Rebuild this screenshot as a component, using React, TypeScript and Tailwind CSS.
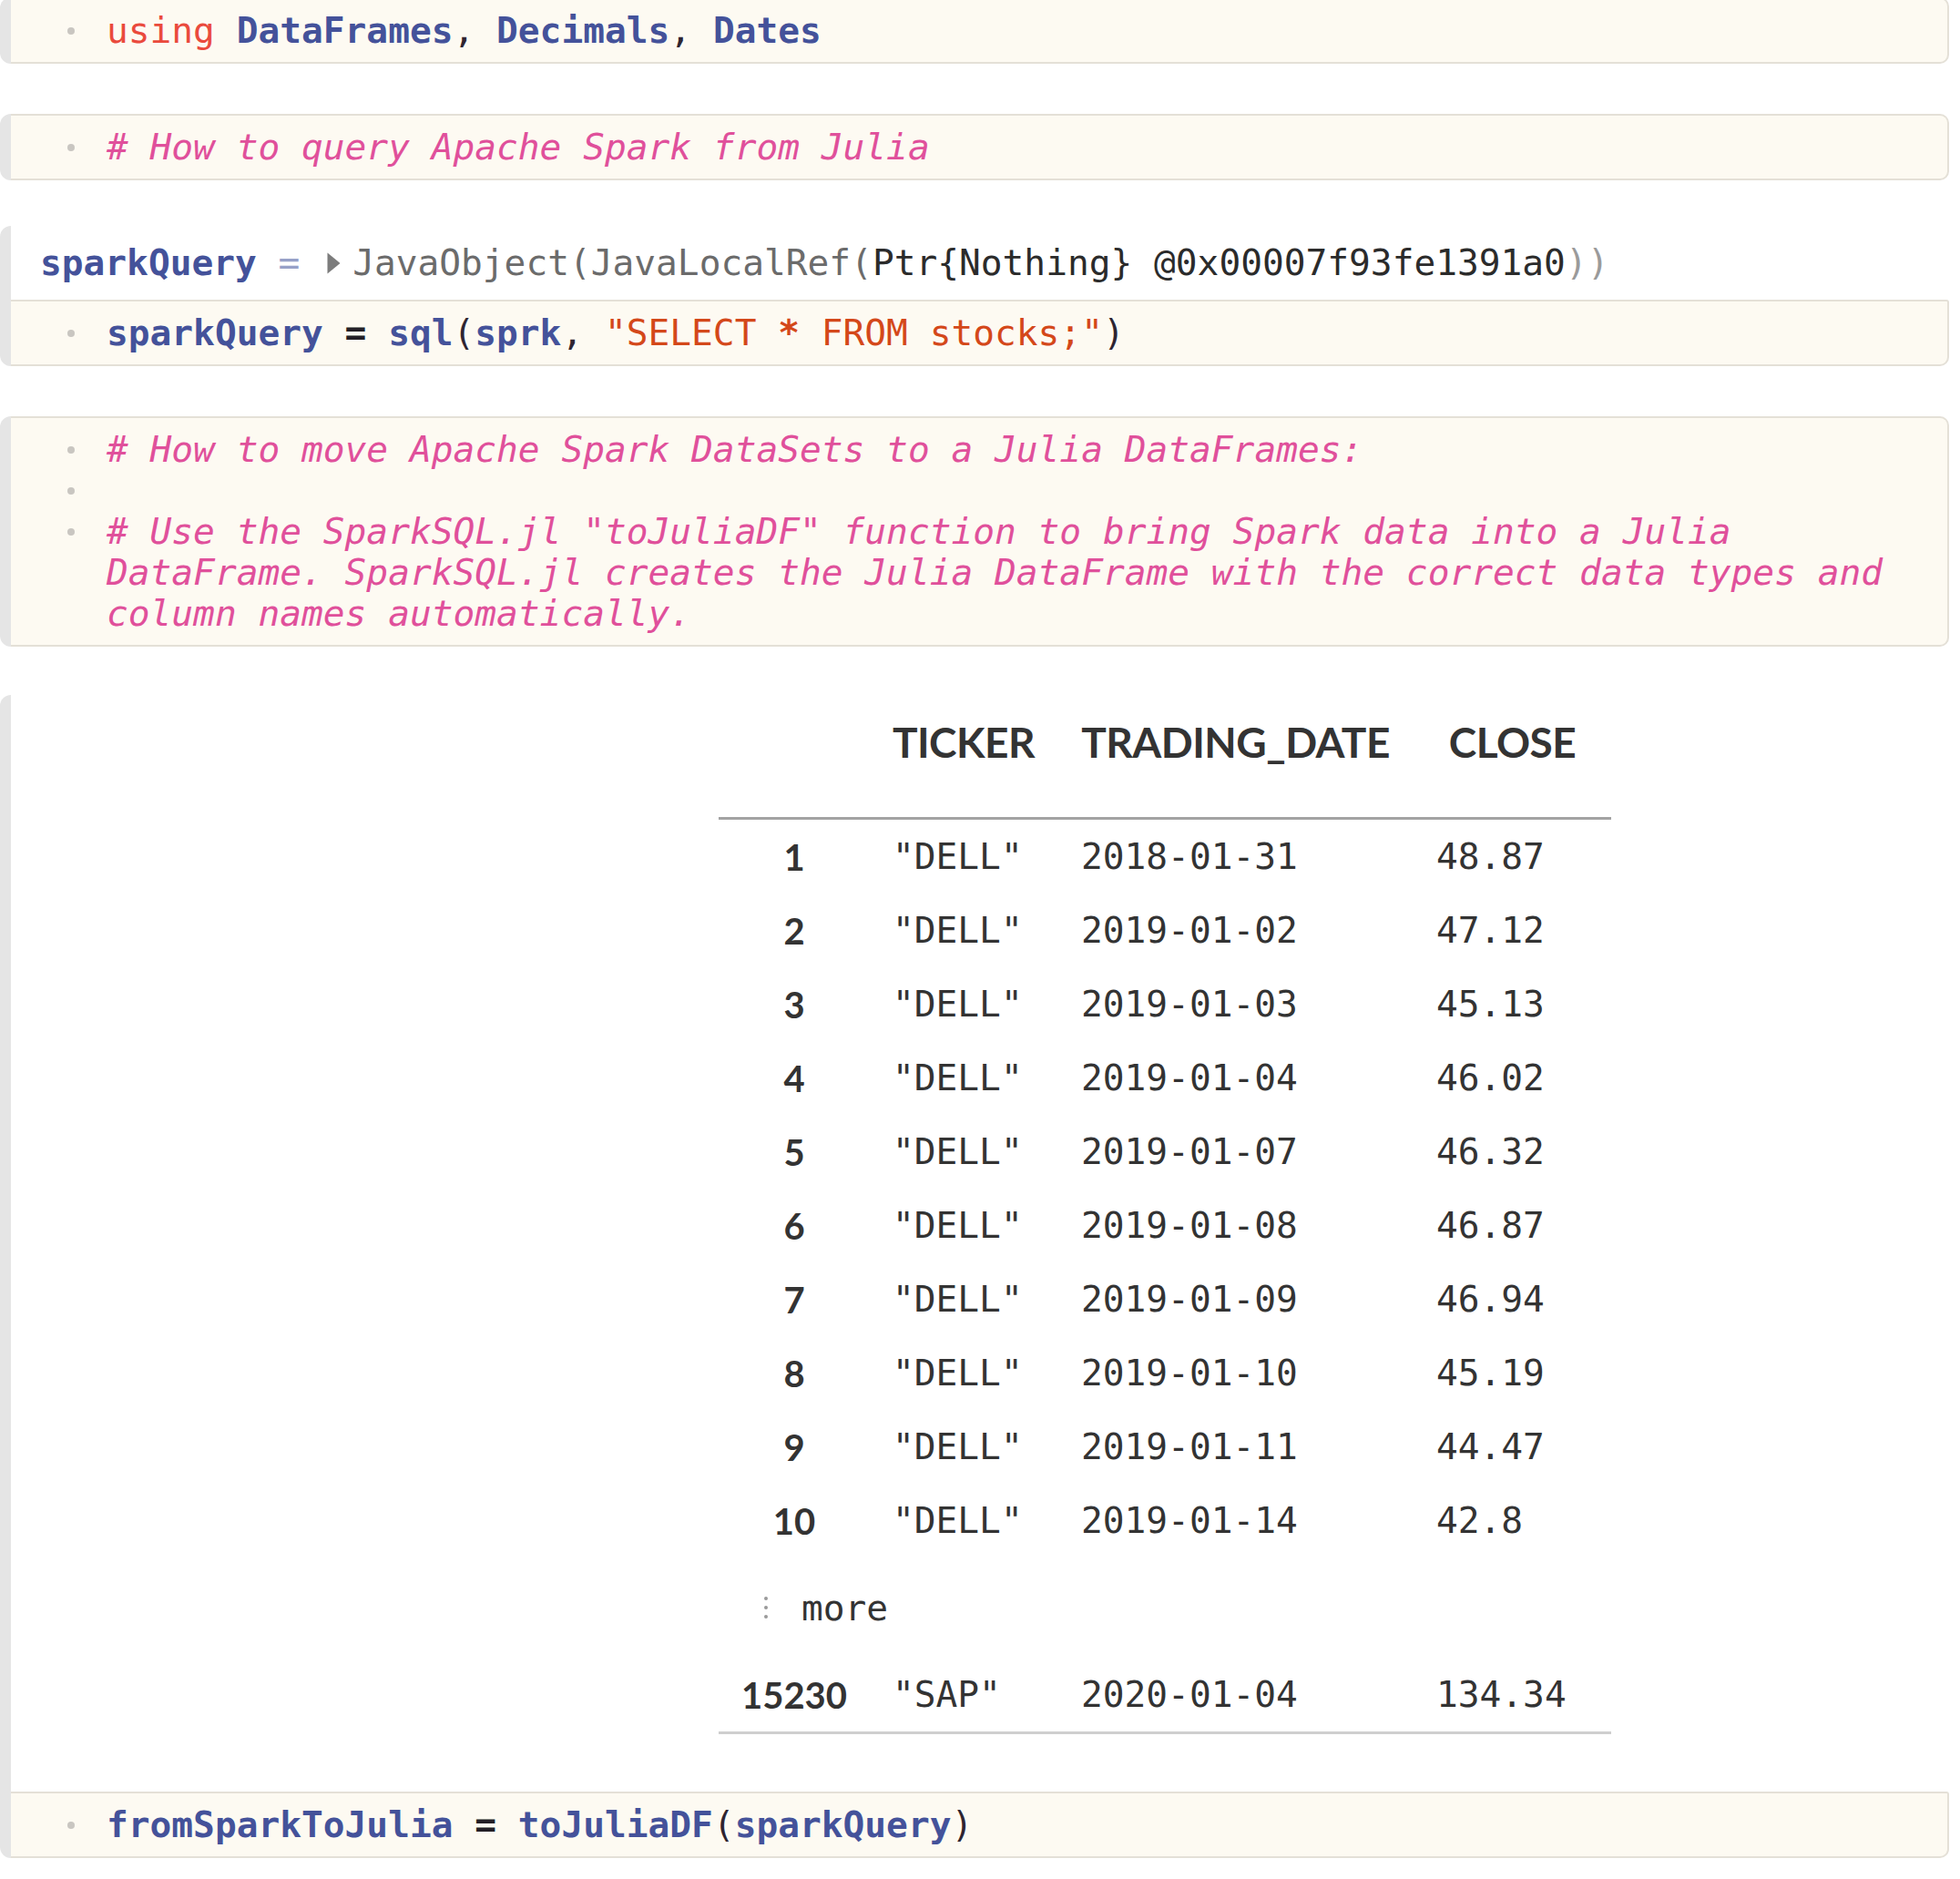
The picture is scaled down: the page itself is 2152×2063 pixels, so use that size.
import React from "react";

const mono = "font-['DejaVu_Sans_Mono',monospace] text-[39.5px] leading-[45px] whitespace-pre";

type Tok = [string, string];

const C = {
  name: "text-[#44529a] font-bold",
  kw: "text-[#ea4a3d]",
  punct: "text-[#2e2430]",
  op: "text-[#231f26] font-bold",
  str: "text-[#d4481a]",
  strBold: "text-[#d4481a] font-bold",
  comment: "text-[#e0509b] italic",
};

function CodeLine({ tokens, bullet = true }: { tokens: Tok[]; bullet?: boolean }) {
  return (
    <div className="flex h-[45px] items-center">
      {bullet ? (
        <span className="ml-[62px] mr-[35px] h-[8px] w-[8px] shrink-0 rounded-full bg-[#c9c6c1]" />
      ) : (
        <span className="w-[105px] shrink-0" />
      )}
      <span className={mono}>
        {tokens.map(([cls, text], i) => (
          <span key={i} className={cls}>
            {text}
          </span>
        ))}
      </span>
    </div>
  );
}

function Cell({
  output,
  children,
  className = "",
}: {
  output?: React.ReactNode;
  children: React.ReactNode;
  className?: string;
}) {
  return (
    <div className={`mr-[12px] flex ${className}`}>
      <div className="w-[12px] shrink-0 rounded-l-[12px] bg-[#e5e5e5]" />
      <div className="flex min-w-0 flex-1 flex-col">
        {output}
        <div
          className={`border-2 border-l-0 border-[#e4e0d7] bg-[#fdfaf2] py-[12px] ${
            output ? "rounded-br-[10px] rounded-tr-[3px]" : "rounded-r-[10px]"
          }`}
        >
          {children}
        </div>
      </div>
    </div>
  );
}

const rows: [string, string, string, string][] = [
  ["1", '"DELL"', "2018-01-31", "48.87"],
  ["2", '"DELL"', "2019-01-02", "47.12"],
  ["3", '"DELL"', "2019-01-03", "45.13"],
  ["4", '"DELL"', "2019-01-04", "46.02"],
  ["5", '"DELL"', "2019-01-07", "46.32"],
  ["6", '"DELL"', "2019-01-08", "46.87"],
  ["7", '"DELL"', "2019-01-09", "46.94"],
  ["8", '"DELL"', "2019-01-10", "45.19"],
  ["9", '"DELL"', "2019-01-11", "44.47"],
  ["10", '"DELL"', "2019-01-14", "42.8"],
];

const rowNum = "font-['Lato',sans-serif] font-bold text-[40px] text-[#333] text-center";
const cellVal = `${mono} text-[#333]`;

function DataRow({ r, last = false }: { r: [string, string, string, string]; last?: boolean }) {
  return (
    <div className={`flex items-center ${last ? "h-[84px] border-b-[3px] border-[#cfcfcf]" : "h-[81px]"}`}>
      <div className={`w-[166px] ${rowNum}`}>{r[0]}</div>
      <div className={`w-[206px] pl-[25px] ${cellVal}`}>{r[1]}</div>
      <div className={`w-[391px] pl-[26px] ${cellVal}`}>{r[2]}</div>
      <div className={`w-[217px] pl-[25px] ${cellVal}`}>{r[3]}</div>
    </div>
  );
}

function StocksTable() {
  const head = "text-center pt-[27px] font-['Lato',sans-serif] font-bold text-[46px] leading-[50px] tracking-[-0.5px] text-[#333]";
  return (
    <div className="ml-[777px] w-[980px] pb-[63px]">
      <div className="flex h-[137px] border-b-[3px] border-[#a3a3a3]">
        <div className="w-[166px]" />
        <div className={`w-[206px] ${head}`}>TICKER</div>
        <div className={`w-[391px] ${head}`}>TRADING_DATE</div>
        <div className={`w-[217px] ${head}`}>CLOSE</div>
      </div>
      {rows.map((r) => (
        <DataRow key={r[0]} r={r} />
      ))}
      <div className="flex h-[110px] items-center pl-[50px]">
        <div className="mr-[37px] flex flex-col gap-[6px]">
          <span className="h-[4px] w-[4px] rounded-full bg-[#9a9a9a]" />
          <span className="h-[4px] w-[4px] rounded-full bg-[#9a9a9a]" />
          <span className="h-[4px] w-[4px] rounded-full bg-[#9a9a9a]" />
        </div>
        <span className={cellVal}>more</span>
      </div>
      <DataRow r={["15230", '"SAP"', "2020-01-04", "134.34"]} last />
    </div>
  );
}

export default function App() {
  return (
    <div className="h-[2063px] w-[2152px] overflow-hidden bg-white">
      <Cell className="-mt-[3px]">
        <CodeLine
          tokens={[
            [C.kw, "using"],
            [C.punct, " "],
            [C.name, "DataFrames"],
            [C.punct, ", "],
            [C.name, "Decimals"],
            [C.punct, ", "],
            [C.name, "Dates"],
          ]}
        />
      </Cell>

      <Cell className="mt-[55px]">
        <CodeLine tokens={[[C.comment, "# How to query Apache Spark from Julia"]]} />
      </Cell>

      <Cell
        className="mt-[50px]"
        output={
          <div className="flex h-[81px] items-center rounded-tr-[8px] bg-white pl-[32px]">
            <span className={mono}>
              <span className={C.name}>sparkQuery</span>
              <span className="text-[#97a1c8]"> = </span>
            </span>
            <svg width="17" height="26" viewBox="0 0 17 26" className="ml-[5px] mr-[12px] shrink-0">
              <path d="M1.5 1.5 L15.5 13 L1.5 24.5 Z" fill="#7c7c7c" />
            </svg>
            <span className={mono}>
              <span className="text-[#6b6b6b]">JavaObject(JavaLocalRef(</span>
              <span className="text-[#2b2b2b]">Ptr{"{"}Nothing{"}"} @0x00007f93fe1391a0</span>
              <span className="text-[#9a9a9a]">))</span>
            </span>
          </div>
        }
      >
        <CodeLine
          tokens={[
            [C.name, "sparkQuery"],
            [C.punct, " "],
            [C.op, "="],
            [C.punct, " "],
            [C.name, "sql"],
            [C.punct, "("],
            [C.name, "sprk"],
            [C.punct, ", "],
            [C.str, '"SELECT '],
            [C.strBold, "*"],
            [C.str, ' FROM stocks;"'],
            [C.punct, ")"],
          ]}
        />
      </Cell>

      <Cell className="mt-[55px]">
        <CodeLine tokens={[[C.comment, "# How to move Apache Spark DataSets to a Julia DataFrames:"]]} />
        <CodeLine tokens={[]} />
        <CodeLine
          tokens={[[C.comment, '# Use the SparkSQL.jl "toJuliaDF" function to bring Spark data into a Julia']]}
        />
        <CodeLine
          bullet={false}
          tokens={[[C.comment, "DataFrame. SparkSQL.jl creates the Julia DataFrame with the correct data types and"]]}
        />
        <CodeLine bullet={false} tokens={[[C.comment, "column names automatically."]]} />
      </Cell>

      <Cell className="mt-[53px]" output={<StocksTable />}>
        <CodeLine
          tokens={[
            [C.name, "fromSparkToJulia"],
            [C.punct, " "],
            [C.op, "="],
            [C.punct, " "],
            [C.name, "toJuliaDF"],
            [C.punct, "("],
            [C.name, "sparkQuery"],
            [C.punct, ")"],
          ]}
        />
      </Cell>
    </div>
  );
}
